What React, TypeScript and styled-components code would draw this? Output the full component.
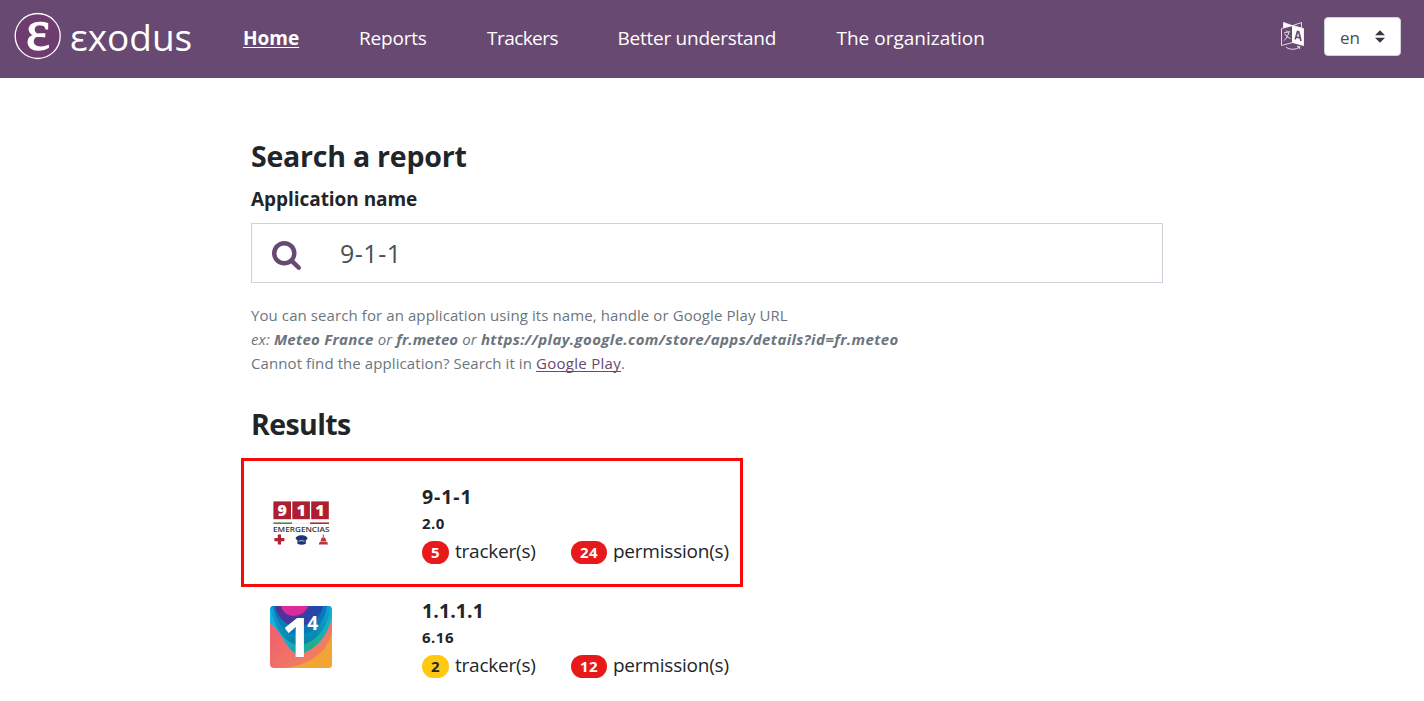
import React from "react";
import styled, { createGlobalStyle } from "styled-components";

const GlobalStyle = createGlobalStyle`
  * { box-sizing: border-box; }
  body {
    margin: 0;
    background: #fff;
    color: #212529;
    font-family: "Open Sans", "Noto Sans", sans-serif;
    overflow: hidden;
  }
`;

const Header = styled.header`
  display: flex;
  align-items: flex-start;
  height: 78px;
  padding: 0 23px 0 14px;
  background: #684971;
  color: #fff;
`;

const Brand = styled.a`
  display: flex;
  align-items: center;
  width: 229px;
  height: 73px;
  color: #fff;
`;

const BrandMark = styled.svg`
  flex: none;
  width: 48px;
  height: 48px;
  margin-top: -1px;
  overflow: visible;
`;

const BrandName = styled.span`
  margin-left: 8px;
  font-size: 37px;
  line-height: 50px;
`;

const Nav = styled.nav`
  display: flex;
  gap: 60px;
  flex: 1;
  padding-top: 23px;
`;

const NavLink = styled.a<{ $width: number; $spacing?: number; $active?: boolean }>`
  width: ${(p) => p.$width}px;
  font-size: 19px;
  line-height: 31px;
  white-space: nowrap;
  letter-spacing: ${(p) => p.$spacing ?? 0}px;
  font-weight: ${(p) => (p.$active ? 700 : 400)};
  text-decoration: ${(p) => (p.$active ? "underline" : "none")};
  text-decoration-thickness: 1px;
  text-underline-offset: 2px;
`;

const LanguageIcon = styled.svg`
  width: 26px;
  height: 30px;
  margin: 21px 18px 0 0;
`;

const LanguageSelect = styled.button`
  display: flex;
  align-items: center;
  justify-content: space-between;
  width: 77px;
  height: 39px;
  margin-top: 17px;
  padding: 2px 15px 0 15px;
  border: 1px solid #ced4da;
  border-radius: 4px;
  background: #fff;
  color: #495057;
  font: 400 17px/24px "Open Sans", sans-serif;
`;

const Arrows = styled.svg`
  width: 10px;
  height: 13px;
  margin-top: -3px;
`;

const Main = styled.main`
  width: 912px;
  margin: 60px 0 0 251px;
`;

const Title = styled.h1<{ $spacing: number }>`
  margin: 0;
  font-size: 28.5px;
  line-height: 36px;
  letter-spacing: ${(p) => p.$spacing}px;
`;

const Label = styled.h2`
  margin: 13px 0 12px;
  font-size: 19px;
  line-height: 24px;
  letter-spacing: -0.05px;
`;

const SearchBox = styled.div`
  display: flex;
  align-items: center;
  height: 60px;
  padding-left: 20px;
  border: 1px solid #ced0da;
`;

const SearchIcon = styled.svg`
  width: 29px;
  height: 29px;
  margin-top: 4px;
`;

const SearchValue = styled.span`
  margin-left: 39px;
  color: #495057;
  font-size: 25px;
  letter-spacing: 0.5px;
`;

const Help = styled.div`
  margin: 20px 0 31px;
  color: #6c757d;
  font-size: 15px;
  line-height: 24px;
  letter-spacing: 0.09px;
`;

const Example = styled.div`
  font-style: italic;
  letter-spacing: 0.14px;
`;

const Sample = styled.b<{ $spacing: number }>`
  letter-spacing: ${(p) => p.$spacing}px;
`;

const PlayLink = styled.a`
  color: #684971;
  letter-spacing: 0.28px;
  text-decoration: underline;
  text-decoration-skip-ink: none;
  text-underline-offset: 2px;
`;

const Results = styled.section`
  margin-top: 24px;
`;

const ResultRow = styled.article`
  position: relative;
  display: flex;
  height: 114px;
`;

const Highlight = styled.div`
  position: absolute;
  top: -8px;
  left: -10px;
  width: 502px;
  height: 129px;
  border: 3px solid #f80808;
`;

const AppIcon = styled.svg`
  width: 62px;
  height: 62px;
  margin: 26px 90px 0 19px;
  overflow: visible;
`;

const Details = styled.div`
  padding-top: 17px;
`;

const AppName = styled.div<{ $spacing: number }>`
  font-size: 19.5px;
  font-weight: 700;
  line-height: 27px;
  letter-spacing: ${(p) => p.$spacing}px;
`;

const Version = styled.div`
  font-size: 15px;
  font-weight: 700;
  line-height: 26px;
  letter-spacing: 0.5px;
`;

const Stats = styled.div`
  display: flex;
  align-items: center;
  height: 31px;
`;

const Stat = styled.div<{ $width: number }>`
  display: flex;
  align-items: center;
  width: ${(p) => p.$width}px;
  font-size: 19px;
  line-height: 29px;
  white-space: nowrap;
  letter-spacing: -0.22px;
`;

const Badge = styled.span<{ $tone: "danger" | "warning" }>`
  height: 23px;
  margin: 2px 6px 0 0;
  padding: 0 9px;
  border-radius: 12px;
  background: ${(p) => (p.$tone === "danger" ? "#e8191b" : "#ffc812")};
  color: ${(p) => (p.$tone === "danger" ? "#fff" : "#212529")};
  font-size: 15px;
  font-weight: 700;
  line-height: 23px;
  letter-spacing: 0.4px;
`;

function EmergencyIcon() {
  return (
    <AppIcon viewBox="0 0 62 62">
      {["9", "1", "1"].map((digit, i) => (
        <g key={i}>
          <rect x={3.4 + i * 18.9} y={9.4} width={17.6} height={17.8} fill="#ae1e31" />
          <text x={12.2 + i * 18.9} y={24} fill="#fff" fontSize="16" fontWeight="800" textAnchor="middle">
            {digit}
          </text>
        </g>
      ))}
      <path d="M3.4 31.2H22" stroke="#3f8a4b" strokeWidth="1.6" />
      <path d="M22 31.2H40" stroke="#eee" strokeWidth="1" />
      <path d="M40 31.2H59" stroke="#b3293b" strokeWidth="1.6" />
      <text x="3" y="40" fontSize="7.8" fontWeight="600" fill="#333" textLength="56.5" lengthAdjust="spacingAndGlyphs">
        EMERGENCIAS
      </text>
      <path d="M9.4 42.6v10M4.4 47.6h10" stroke="#b3202f" strokeWidth="3.2" />
      <path d="M25.6 46.6c0-2 3-3.4 6-3.4s6 1.4 6 3.4l-1.8 2v3.2c-2.4 1.3-6 1.3-8.4 0v-3.2z" fill="#1d3474" />
      <path d="M28.6 49.2q3-1.3 6 0" stroke="#b7c1dc" strokeWidth="1" fill="none" />
      <path d="M53.4 42.6v2.5" stroke="#c6505c" strokeWidth="1.2" />
      <path d="M51.8 45.4H55l1.500 4h-6.200zM49.600 50h7.600l.8 2.600h-9.200z" fill="#b93443" />
    </AppIcon>
  );
}

function OneIcon() {
  return (
    <AppIcon viewBox="0 0 62 62">
      <defs>
        <clipPath id="tile"><rect width="62" height="62" rx="4" /></clipPath>
        <linearGradient id="coral" x1="0" y1="0" x2="1" y2="1">
          <stop offset="0.3" stopColor="#f0646e" />
          <stop offset="1" stopColor="#f08a5a" />
        </linearGradient>
        <linearGradient id="sea" x1="0" y1="0" x2="1" y2="0">
          <stop offset="0" stopColor="#14b4e6" />
          <stop offset="0.4" stopColor="#1aa6b4" />
          <stop offset="0.7" stopColor="#20ae8c" />
          <stop offset="1" stopColor="#12b0d8" />
        </linearGradient>
        <linearGradient id="deep" x1="0" y1="0" x2="0" y2="1">
          <stop offset="0" stopColor="#10a4dc" />
          <stop offset="1" stopColor="#0684a4" />
        </linearGradient>
        <linearGradient id="violet" x1="0" y1="0" x2="1" y2="0">
          <stop offset="0" stopColor="#5a2d96" />
          <stop offset="1" stopColor="#1c4cac" />
        </linearGradient>
      </defs>
      <g clipPath="url(#tile)">
        <rect width="62" height="62" fill="url(#coral)" />
        <path d="M62 26C57 46 42 58 15 62H62z" fill="#f0a534" />
        <path d="M0 0V17C11 24 17 46 28 48C43 47 59 30 62 10V0z" fill="url(#sea)" />
        <path d="M0 0C3 19 14 38 29 39C45 38 58 22 61 0z" fill="url(#deep)" />
        <path d="M3 0C6 17 16 30 30 29C44 28 55 16 57 0z" fill="#087ab8" />
        <path d="M5 0C8 14 19 22 31 20C43 18 51 11 53 0z" fill="url(#violet)" />
        <path d="M11 0C13 8 20 11 27 9.500C33 8 37 4 38 0z" fill="#dc2a9c" />
      </g>
      <text x="11.5" y="51" fill="#fff" fontSize="53" fontWeight="700" textLength="31" lengthAdjust="spacingAndGlyphs">1</text>
      <text x="37.2" y="24.300" fill="#fff" fontSize="19" fontWeight="700">4</text>
    </AppIcon>
  );
}

interface Result {
  name: string;
  spacing: number;
  version: string;
  trackers: number;
  tone: "danger" | "warning";
  permissions: number;
  icon: React.ReactNode;
  highlighted?: boolean;
}

const results: Result[] = [
  { name: "9-1-1", spacing: 0.9, version: "2.0", trackers: 5, tone: "danger", permissions: 24, icon: <EmergencyIcon />, highlighted: true },
  { name: "1.1.1.1", spacing: 0.1, version: "6.16", trackers: 2, tone: "warning", permissions: 12, icon: <OneIcon /> },
];

export default function App() {
  return (
    <>
      <GlobalStyle />
      <Header>
        <Brand>
          <BrandMark viewBox="0 0 48 48">
            <circle cx="23.7" cy="24" r="22.5" fill="#6f3c70" stroke="#fff" strokeWidth="1.3" />
            <text
              x="24"
              y="37.3"
              fill="#fff"
              stroke="#fff"
              strokeWidth="1.3"
              fontFamily="Liberation Serif, serif"
              fontSize="57"
              textAnchor="middle"
            >
              ε
            </text>
          </BrandMark>
          <BrandName>εxodus</BrandName>
        </Brand>
        <Nav>
          <NavLink $width={56} $active>Home</NavLink>
          <NavLink $width={68} $spacing={-0.2}>Reports</NavLink>
          <NavLink $width={70.5} $spacing={-0.55}>Trackers</NavLink>
          <NavLink $width={159} $spacing={-0.25}>Better understand</NavLink>
          <NavLink $width={149}>The organization</NavLink>
        </Nav>
        <LanguageIcon viewBox="0 0 26 30" fill="none" stroke="#fff" strokeWidth="0.8">
          <path d="M3.5 1.5L12 4.5L3.5 6.5z" fill="#fff" />
          <path d="M13 4.500L21.5 1.500V6.5" />
          <path d="M1.5 7.5L12.5 4.500V21.5L1.5 24.5z" />
          <path d="M12.5 4.500L23.5 7.5V24.5L12.5 21.5z" fill="#fff" />
          <path d="M4 12L10 10.5M6.300 9.500L7.300 11M9 11C8 14.500 6.500 17.500 4 19.500M5 13C6.500 15.500 8.500 17 10.500 17.500" />
          <path d="M15.200 18.500L17.500 10.500L18.700 10.800L21 20M16.200 16L20 16.800" stroke="#684971" strokeWidth="1.7" />
          <path d="M6 26C9 29 16 29 19.500 26M17 25.500L19.800 25.700L19.300 28" />
        </LanguageIcon>
        <LanguageSelect>
          en
          <Arrows viewBox="0 0 4 5"><path d="M2 0L0 2h4zm0 5L0 3h4z" fill="#343a40" /></Arrows>
        </LanguageSelect>
      </Header>
      <Main>
        <Title $spacing={-0.22}>Search a report</Title>
        <Label>Application name</Label>
        <SearchBox>
          <SearchIcon viewBox="0 128 1664 1664">
            <path
              fill="#684971"
              d="M1152 832q0-185-131.5-316.5t-316.5-131.5-316.5 131.5-131.5 316.5 131.5 316.5 316.5 131.5 316.5-131.5 131.5-316.5zm512 832q0 52-38 90t-90 38q-54 0-90-38l-343-342q-179 124-399 124-143 0-273.5-55.5t-225-150-150-225-55.5-273.5 55.5-273.5 150-225 225-150 273.5-55.5 273.5 55.5 225 150 150 225 55.5 273.5q0 220-124 399l343 343q37 37 37 90z"
            />
          </SearchIcon>
          <SearchValue>9-1-1</SearchValue>
        </SearchBox>
        <Help>
          <div>You can search for an application using its name, handle or Google Play URL</div>
          <Example>
            ex: <Sample $spacing={0.26}>Meteo France</Sample> or <Sample $spacing={0.05}>fr.meteo</Sample> or{" "}
            <Sample $spacing={0.38}>https://play.google.com/store/apps/details?id=fr.meteo</Sample>
          </Example>
          <div>
            Cannot find the application? Search it in <PlayLink>Google Play</PlayLink>.
          </div>
        </Help>
        <Title $spacing={-0.6}>Results</Title>
        <Results>
          {results.map((r) => (
            <ResultRow key={r.name}>
              {r.icon}
              <Details>
                <AppName $spacing={r.spacing}>{r.name}</AppName>
                <Version>{r.version}</Version>
                <Stats>
                  <Stat $width={149}>
                    <Badge $tone={r.tone}>{r.trackers}</Badge>tracker(s)
                  </Stat>
                  <Stat $width={160}>
                    <Badge $tone="danger">{r.permissions}</Badge>permission(s)
                  </Stat>
                </Stats>
              </Details>
              {r.highlighted && <Highlight />}
            </ResultRow>
          ))}
        </Results>
      </Main>
    </>
  );
}
